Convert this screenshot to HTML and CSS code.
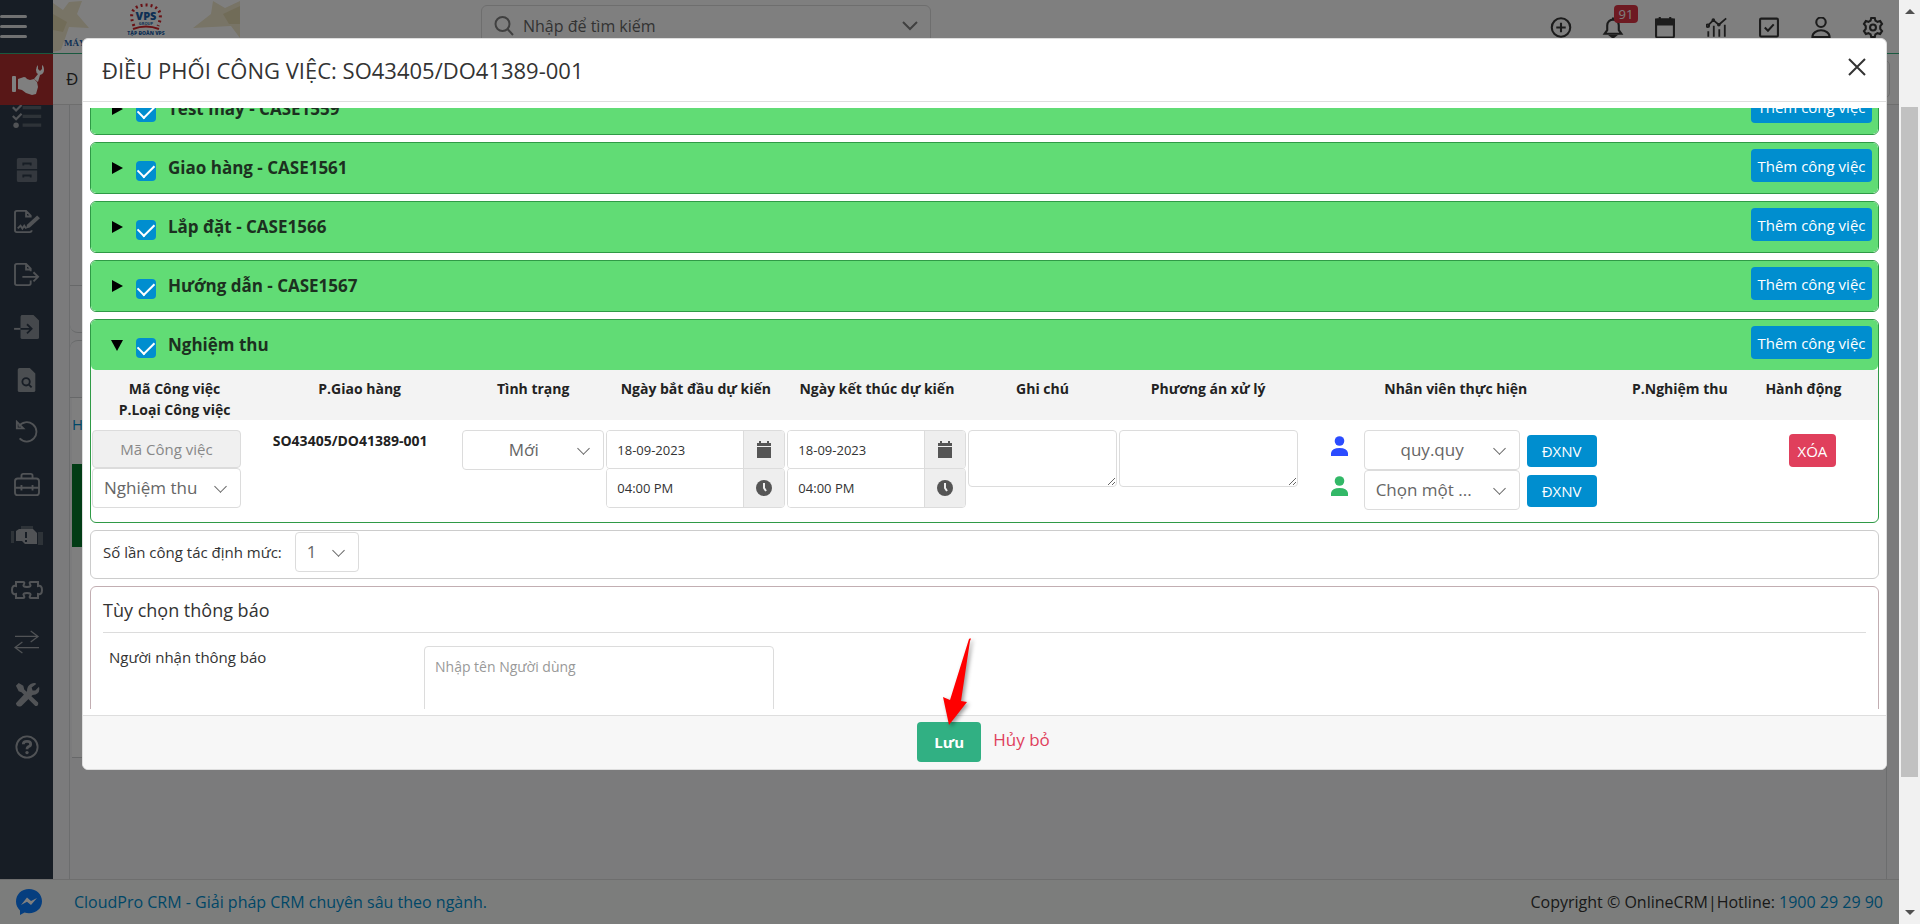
FILE: index.html
```html
<!DOCTYPE html>
<html lang="vi">
<head>
<meta charset="utf-8">
<title>Điều phối công việc - CloudPro CRM</title>
<link rel="stylesheet" href="styles.css">
</head>
<body>
<div class="shell">
  <div class="app">
    <header class="topbar">
      <button class="burger" type="button" aria-label="Menu"><i></i><i></i><i></i></button>
      <svg class="logo" viewBox="0 0 187 52" width="187" height="52">
        <rect width="187" height="52" fill="#fff"/>
        <path d="M0 3L10 10 16 2 29 1 24 14 36 28 16 27 8 50 0 52Z" fill="#f0e8cc"/>
        <path d="M0 14L14 22 10 32 0 30Z" fill="#e3d8b0"/>
        <path d="M140 28L158 14 160 1 172 8 187 1V38L178 26Z" fill="#f0e8cc"/>
        <path d="M170 14L187 6V24L176 24Z" fill="#e3d8b0"/>
        <path d="M81 26C74 10 84 5 93 5S112 10 105 26" fill="none" stroke="#d2232a" stroke-width="3" stroke-dasharray="2 3"/>
        <text x="93" y="20" class="logo-vps">VPS</text>
        <text x="93" y="25" class="logo-tiny">GROUP</text>
        <path d="M80 29Q93 24 106 29" fill="none" stroke="#d2232a" stroke-width="2"/>
        <text x="93" y="35" class="logo-small">TẬP ĐOÀN VPS</text>
        <text x="11" y="46" class="logo-word">MÁY</text>
      </svg>
      <label class="search">
        <svg width="20" height="20" viewBox="0 0 20 20" class="line"><circle cx="8.500" cy="8" r="7"/><path d="M13.500 13L19 19"/></svg>
        <input type="text" placeholder="Nhập để tìm kiếm" aria-label="Tìm kiếm">
        <svg width="16" height="10" viewBox="0 0 16 10" class="line"><path d="M1 1L8 8 15 1"/></svg>
      </label>
      <nav class="tools">
        <button type="button" aria-label="Thêm"><svg viewBox="0 0 20 20"><circle cx="10" cy="10" r="8.800"/><path d="M10 5.500V14.500M5.500 10H14.500"/></svg></button>
        <button type="button" aria-label="Thông báo" class="bell"><svg viewBox="0 0 20 20"><path d="M2 16H18L15.500 12.500V8A5.500 5.500 0 0 0 4.500 8V12.500ZM10 .500V2.500"/><path d="M8 18H12L10 19.500Z" fill="#383838"/></svg><span class="badge">91</span></button>
        <button type="button" aria-label="Lịch"><svg viewBox="0 0 20 20"><rect x="1.500" y="2.500" width="17" height="17" rx="1.500"/><path d="M1.500 2.500H18.500V7H1.500Z" fill="#383838"/><path d="M5 0V3M15 0V3"/></svg></button>
        <button type="button" aria-label="Báo cáo"><svg viewBox="0 0 24 20"><path d="M2 8L8 2 14 7 22 0M2.500 20V14M8.500 20V8M14.500 20V12M20.500 20V7"/><circle cx="2" cy="8" r="1.500"/><circle cx="8" cy="2" r="1"/><circle cx="14" cy="7" r="1"/></svg></button>
        <button type="button" aria-label="Công việc"><svg viewBox="0 0 20 20"><rect x="1.500" y="1.500" width="17" height="17" rx="1"/><path d="M6 10L9 13 14.500 7"/></svg></button>
        <button type="button" aria-label="Tài khoản"><svg viewBox="0 0 20 20"><circle cx="10" cy="5" r="4.500"/><path d="M1.800 19.200C1.800 10.500 18.200 10.500 18.200 19.200Z"/></svg></button>
        <button type="button" aria-label="Cài đặt"><svg viewBox="0 0 20 20"><circle cx="10" cy="10" r="2.800"/><path d="M8.300 1H11.700L12.300 3.500 14.300 4.600 16.800 3.900 18.600 6.700 16.900 8.700V11.300L18.600 13.300 16.800 16.100 14.300 15.400 12.300 16.500 11.700 19H8.300L7.700 16.500 5.700 15.400 3.200 16.100 1.400 13.300 3.100 11.300V8.700L1.400 6.700 3.200 3.900 5.700 4.600 7.700 3.500Z"/></svg></button>
      </nav>
    </header>
    <div class="middle">
      <aside class="sidebar">
        <a href="#" class="current" aria-label="Điều phối"><svg width="34" height="32" viewBox="0 0 34 32"><rect x="2" y="12" width="4" height="16" rx="1"/><path d="M8 15L14 13Q16 13 17 15L20 16 24 15 27 18 28 23 26 30 22 31 16 29 12 26 8 25Z"/><path d="M28 1Q26 3 26 6T28 10L24 15 28 18 30 11Q34 10 34 6T32 1V5L30 7 28 5Z"/></svg></a>
        <nav class="side-list">
          <a href="#" class="dim" aria-label="Danh sách"><svg viewBox="0 0 26 22"><path d="M9 1H26V4H9ZM9 9H26V12H9ZM9 17H26V20H9Z" opacity=".4"/><path d="M0 2L3 5 8 0" class="stroke"/><path d="M0 10L3 13 8 8" class="stroke"/><circle cx="3" cy="18.500" r="2.500"/></svg></a>
          <a href="#" class="dim" aria-label="Lưu trữ"><svg viewBox="0 0 26 26"><path fill-rule="evenodd" d="M2 2Q2 0 4 0H22Q24 0 24 2V12H2ZM8 8H10V7H16V8H18V5H8ZM2 13.500H24V24Q24 26 22 26H4Q2 26 2 24ZM8 21H10V20H16V21H18V18H8Z" opacity=".5"/></svg></a>
          <a href="#" aria-label="Hợp đồng"><svg viewBox="0 0 28 26"><path class="stroke" d="M18 8V6L13 1H3Q1 1 1 3V22Q1 24 3 24H17Q19 24 19 22M13 1V7H18M4 20L7 17 9 20 11 17 13 20"/><path d="M25 6L28 9 17 19 13 20 14 16Z"/></svg></a>
          <a href="#" aria-label="Xuất"><svg viewBox="0 0 28 26"><path class="stroke" d="M18 9V6L13 1H3Q1 1 1 3V22Q1 24 3 24H16Q18 24 18 22V19M13 1V7H18M9 15H26M21 10L26 15 21 20"/></svg></a>
          <a href="#" aria-label="Nhập"><svg viewBox="0 0 28 26"><path d="M8 0H21L27 6V24Q27 26 25 26H9Q7 26 7 24V2Z" opacity=".8"/><path d="M0 15H7" class="stroke"/><path d="M7 15H19M14 10L19 15 14 20" fill="none" stroke="#2f3b4a" stroke-width="2"/></svg></a>
          <a href="#" aria-label="Tra cứu"><svg viewBox="0 0 26 26"><path d="M5 0H16L22 6V24Q22 26 20 26H5Q3 26 3 24V2Q3 0 5 0Z" opacity=".9"/><circle cx="12" cy="15" r="4" fill="none" stroke="#2f3b4a" stroke-width="2"/><path d="M15 18L18 21" stroke="#2f3b4a" stroke-width="2"/></svg></a>
          <a href="#" aria-label="Hoàn tác"><svg viewBox="0 0 26 26"><path class="stroke" d="M4 7A10.500 10.500 0 1 1 5 20M2 2V9H9Z"/></svg></a>
          <a href="#" aria-label="Bộ công cụ"><svg viewBox="0 0 28 26"><rect class="stroke" x="1" y="6" width="26" height="18" rx="3"/><path class="stroke" d="M8 6V3Q8 1 10 1H18Q20 1 20 3V6M1 16H27M8 13V19M20 13V19"/></svg></a>
          <a href="#" aria-label="Động cơ"><svg viewBox="0 0 32 22"><path d="M0 5H3V17H0ZM10 0H22V3H10ZM27 6H32V19H27Z" opacity=".4"/><path d="M5 5L8 3H22L26 7V18H14L11 15H5Z"/><path d="M15 6V12M15 14V16" stroke="#2f3b4a" stroke-width="2"/></svg></a>
          <a href="#" aria-label="Tích hợp"><svg viewBox="0 0 32 22"><path class="stroke" d="M5 3H12Q14 3 13 5Q11 8 16 8T19 5Q18 3 20 3H27V7Q31 6 31 11T27 15V19H20Q18 19 19 17Q21 14 16 14T13 17Q14 19 12 19H5V15Q1 16 1 11T5 7Z"/></svg></a>
          <a href="#" aria-label="Chuyển đổi"><svg viewBox="0 0 28 26"><path d="M1 7H26M18 1L26 7 18 13M27 19H1M9 13L1 19 9 25" fill="none" stroke="#a2a7ad" stroke-width="1.300"/></svg></a>
          <a href="#" aria-label="Sửa chữa"><svg viewBox="0 0 26 26"><path d="M1 3L4 0 9 3 10 7 25 21Q26 25 22 25L7 10 4 9Z"/><path d="M17 1Q22-1 23 1L18 5 19 8 22 8 26 4Q28 12 19 13L7 25Q2 27 1 22L13 9Q13 3 17 1Z"/></svg></a>
          <a href="#" aria-label="Trợ giúp"><svg viewBox="0 0 26 26"><circle class="stroke" cx="13" cy="13" r="11.500"/><path d="M9 10Q9 7 13 7T17 10Q17 12 14 13 13 14 13 15.500" fill="none" stroke="#a2a7ad" stroke-width="3"/><circle cx="13" cy="19" r="1.800"/></svg></a>
        </nav>
      </aside>
      <main class="page">
        <div class="crumb"><span>Đ</span><span class="crumb-box"></span></div>
        <div class="canvas">
          <section class="panel panel-a"><div></div></section>
          <section class="panel panel-b">
            <div class="panel-head"></div>
            <div class="grid-box"><a href="#">H</a><div class="event"></div></div>
          </section>
        </div>
      </main>
    </div>
    <footer class="footer">
      <svg width="26" height="26" viewBox="0 0 26 26"><path d="M13 0C5.500 0 0 5.300 0 12.500 0 16.200 1.600 19.200 4 21.400V26L8.500 23.600C10 24 11.500 24.200 13 24.200 20.500 24.200 26 19.400 26 12.300S20.500 0 13 0Z" fill="#0a7cff"/><path d="M5 16L11 8.500 15 12 21 9 15 16 11 12.800Z" fill="#fff"/></svg>
      <a href="#">CloudPro CRM - Giải pháp CRM chuyên sâu theo ngành.</a>
      <p>Copyright © OnlineCRM|Hotline: <a href="#">1900 29 29 90</a></p>
    </footer>
  </div>
  <div class="scrollbar"><i class="up"></i><i class="thumb"></i><i class="down"></i></div>
</div>

<div class="backdrop">
  <div class="modal" role="dialog" aria-labelledby="dlg-title">
    <header class="modal-head">
      <h1 id="dlg-title">ĐIỀU PHỐI CÔNG VIỆC: SO43405/DO41389-001</h1>
      <button type="button" aria-label="Đóng"><svg width="18" height="18" viewBox="0 0 18 18"><path d="M1 1L17 17M17 1L1 17" stroke="#333" stroke-width="2" fill="none"/></svg></button>
    </header>
    <div class="modal-body">
      <div class="scrolled">
        <details class="job"><summary><i class="tri"></i><input type="checkbox" id="c1" checked><label for="c1">Test máy - CASE1559</label><button type="button" class="btn blue">Thêm công việc</button></summary></details>
        <details class="job"><summary><i class="tri"></i><input type="checkbox" id="c2" checked><label for="c2">Giao hàng - CASE1561</label><button type="button" class="btn blue">Thêm công việc</button></summary></details>
        <details class="job"><summary><i class="tri"></i><input type="checkbox" id="c3" checked><label for="c3">Lắp đặt - CASE1566</label><button type="button" class="btn blue">Thêm công việc</button></summary></details>
        <details class="job"><summary><i class="tri"></i><input type="checkbox" id="c4" checked><label for="c4">Hướng dẫn - CASE1567</label><button type="button" class="btn blue">Thêm công việc</button></summary></details>
        <details class="job" open>
          <summary><i class="tri"></i><input type="checkbox" id="c5" checked><label for="c5">Nghiệm thu</label><button type="button" class="btn blue">Thêm công việc</button></summary>
          <table class="tasks">
            <colgroup><col class="w-code"><col class="w-ship"><col class="w-status"><col class="w-date"><col class="w-date"><col class="w-note"><col class="w-date"><col class="w-staff"><col class="w-check"><col class="w-act"></colgroup>
            <thead>
              <tr><th>Mã Công việc<br>P.Loại Công việc</th><th>P.Giao hàng</th><th>Tình trạng</th><th>Ngày bắt đầu dự kiến</th><th>Ngày kết thúc dự kiến</th><th>Ghi chú</th><th>Phương án xử lý</th><th>Nhân viên thực hiện</th><th>P.Nghiệm thu</th><th>Hành động</th></tr>
            </thead>
            <tbody>
              <tr>
                <td><div class="stack code"><input type="text" class="field code-input" placeholder="Mã Công việc" aria-label="Mã Công việc" disabled><span class="pick"><select aria-label="Loại Công việc"><option>Nghiệm thu</option></select></span></div></td>
                <td class="ship">SO43405/DO41389-001</td>
                <td><span class="pick mid"><select aria-label="Tình trạng"><option>Mới</option></select></span></td>
                <td><div class="stack">
                  <div class="group"><input type="text" value="18-09-2023" aria-label="Ngày bắt đầu"><span><svg width="14" height="17" viewBox="0 0 14 17"><path d="M2 2V0H4V2H10V0H12V2H14V5H0V2ZM0 6H14V17H0Z"/></svg></span></div>
                  <div class="group"><input type="text" value="04:00 PM" aria-label="Giờ bắt đầu"><span><svg width="16" height="16" viewBox="0 0 16 16"><circle cx="8" cy="8" r="8"/><path d="M8 3V8L10 11" fill="none" stroke="#eee" stroke-width="2"/></svg></span></div></div></td>
                <td><div class="stack">
                  <div class="group"><input type="text" value="18-09-2023" aria-label="Ngày kết thúc"><span><svg width="14" height="17" viewBox="0 0 14 17"><path d="M2 2V0H4V2H10V0H12V2H14V5H0V2ZM0 6H14V17H0Z"/></svg></span></div>
                  <div class="group"><input type="text" value="04:00 PM" aria-label="Giờ kết thúc"><span><svg width="16" height="16" viewBox="0 0 16 16"><circle cx="8" cy="8" r="8"/><path d="M8 3V8L10 11" fill="none" stroke="#eee" stroke-width="2"/></svg></span></div></div></td>
                <td><textarea class="area" aria-label="Ghi chú"></textarea></td>
                <td><textarea class="area" aria-label="Phương án xử lý"></textarea></td>
                <td><div class="staff">
                  <svg class="main" width="17" height="20" viewBox="0 0 17 20"><circle cx="8.500" cy="5" r="4.800"/><path d="M0 20V17Q1 12 8.500 12T17 17V20Z"/></svg><span class="pick mid"><select aria-label="Nhân viên chính"><option>quy.quy</option></select></span><button type="button" class="btn blue">ĐXNV</button>
                  <svg class="second" width="17" height="20" viewBox="0 0 17 20"><circle cx="8.500" cy="5" r="4.800"/><path d="M0 20V17Q1 12 8.500 12T17 17V20Z"/></svg><span class="pick"><select aria-label="Nhân viên phụ"><option>Chọn một ...</option></select></span><button type="button" class="btn blue">ĐXNV</button>
                </div></td>
                <td></td>
                <td class="act"><button type="button" class="btn red">XÓA</button></td>
              </tr>
            </tbody>
          </table>
        </details>
        <section class="quota"><label for="quota">Số lần công tác định mức:</label><span class="pick"><select id="quota"><option>1</option></select></span></section>
        <section class="notify">
          <h2>Tùy chọn thông báo</h2>
          <div class="notify-row"><label for="people">Người nhận thông báo</label><textarea id="people" placeholder="Nhập tên Người dùng"></textarea></div>
        </section>
      </div>
    </div>
    <footer class="modal-foot">
      <button type="button" class="btn save">Lưu</button>
      <a href="#">Hủy bỏ</a>
      <svg class="pointer" width="40" height="94" viewBox="0 0 40 94"><path d="M27 2Q30 0 28 4L19 64 25 65 7 88 1 60 8 63Z" fill="red"/></svg>
    </footer>
  </div>
</div>
</body>
</html>
```
FILE: styles.css
```css
* { box-sizing: border-box; }
body {
  margin: 0;
  font-family: "Open Sans", "Noto Sans", sans-serif;
  font-size: 13px;
  line-height: 20px;
  color: #333;
  overflow: hidden;
}
button, input, select, textarea { font: inherit; color: inherit; margin: 0; }
button { border: 0; background: none; padding: 0; cursor: pointer; }
a { color: #008ecf; text-decoration: none; }
h1, h2, p { margin: 0; font-weight: 400; }

.shell { display: flex; height: 100vh; }
.app { flex: 1; display: flex; flex-direction: column; min-width: 0; background: #f6f7f9; }

/* top bar */
.topbar { display: flex; height: 54px; background: #fff; border-bottom: 1px solid #32b37f; }
.burger { width: 53px; background: #2f3b4a; display: flex; flex-direction: column; gap: 7px; padding-top: 15px; }
.burger i { width: 27px; height: 3px; border-radius: 2px; background: #e0e2e5; }
.logo { flex: none; }
.logo-vps { font: 900 11px "Open Sans", sans-serif; fill: #1c5fa8; text-anchor: middle; }
.logo-tiny { font: 700 4px "Open Sans", sans-serif; fill: #1c5fa8; text-anchor: middle; }
.logo-small { font: 800 5px "Open Sans", sans-serif; fill: #1c5fa8; text-anchor: middle; }
.logo-word { font: 700 9px "Liberation Serif", serif; fill: #1c5fa8; }
.search {
  width: 450px; height: 42px; margin: 5px 0 0 241px; padding: 0 12px;
  display: flex; align-items: center; gap: 7px;
  border: 1px solid #dcdcdc; border-radius: 6px;
}
.search input { flex: 1; min-width: 0; border: 0; outline: 0; background: none; font-size: 16px; }
.search input::placeholder { color: #666; }
.line { fill: none; stroke: #808080; stroke-width: 2; }
.tools { flex: 1; display: flex; justify-content: flex-end; align-items: flex-start; gap: 30px; padding: 17px 15px 0 0; }
.tools button { position: relative; width: 22px; height: 21px; }
.tools svg { width: 22px; height: 21px; fill: none; stroke: #383838; stroke-width: 2; }
.badge { position: absolute; left: 12px; top: -12px; width: 24px; height: 18px; border-radius: 4px; background: #dc3545; color: #fff; font-size: 13px; line-height: 18px; }

/* side bar */
.middle { flex: 1; display: flex; min-height: 0; }
.sidebar { width: 53px; display: flex; flex-direction: column; background: #2f3b4a; padding-bottom: 120px; }
.current { height: 51px; background: #b02e2e; display: grid; place-items: center; }
.current svg { fill: #fff; }
.side-list { flex: 1; display: flex; flex-direction: column; align-items: center; justify-content: space-between; }
.side-list a { display: block; height: 24px; }
.side-list svg { display: block; height: 24px; width: 32px; fill: #a2a7ad; }
.side-list .stroke { fill: none; stroke: #a2a7ad; stroke-width: 2; }

/* page behind */
.page { flex: 1; display: flex; flex-direction: column; min-width: 0; }
.crumb { height: 51px; display: flex; justify-content: space-between; align-items: center; padding: 0 9px 0 13px; background: #fff; border-bottom: 1px solid #dcdcdc; font-size: 17px; }
.crumb-box { width: 200px; height: 38px; border: 1px solid #dcdcdc; border-radius: 5px; }
.canvas { flex: 1; margin: 0 12px 0 16px; border: solid #d8dadc; border-width: 0 1px; }
.panel { border: 1px solid #cfd1d3; border-left: 0; }
.panel-a { height: 228px; border-top: 0; border-radius: 0 0 8px 8px; padding-top: 180px; }
.panel-a div { border-top: 1px solid #cfd1d3; }
.panel-b { margin-top: 7px; border-bottom: 0; border-radius: 8px 8px 0 0; }
.panel-head { height: 57px; border-bottom: 1px solid #cfd1d3; }
.grid-box { margin-left: 2px; height: 360px; padding-top: 16px; background: #fff; border-bottom: 1px solid #cfd1d3; font-size: 15px; }
.event { height: 83px; margin-top: 30px; background: #04782a; }
.footer { height: 45px; display: flex; align-items: center; gap: 32px; padding: 0 16px; background: #f8fbf8; border-top: 1px solid #dcdcdc; font-size: 16px; }
.footer p { margin-left: auto; }

.scrollbar { width: 21px; padding: 9px 2px; background: #f1f1f1; display: flex; flex-direction: column; align-items: center; z-index: 2; }
.scrollbar .up { border: 5px solid transparent; border-top: 0; border-bottom-color: #505050; }
.scrollbar .down { border: 5px solid transparent; border-bottom: 0; border-top-color: #505050; }
.scrollbar .thumb { width: 17px; height: 74%; margin: 93px 0 auto; background: #c1c1c1; }

/* dialog */
.backdrop { position: fixed; inset: 0 21px 0 0; background: rgba(0, 0, 0, .5); padding: 38px 12px 0 82px; }
.modal { background: #fff; border: 1px solid #dedede; border-radius: 6px; display: flex; flex-direction: column; }
.modal-head { display: flex; justify-content: space-between; align-items: center; height: 63px; padding: 0 20px 0 19px; border-bottom: 1px solid #dedede; }
.modal-head h1 { font-size: 22px; line-height: 28px; }
.modal-head button { padding-bottom: 2px; }
.modal-body { height: calc(100vh - 311px); padding: 6px 7px; }
.scrolled { height: 100%; overflow: hidden; display: flex; flex-direction: column; gap: 7px; }
.scrolled > * { flex: none; }
.scrolled > :first-child { margin-top: -25px; }

.job { border: 1px solid #2f9a46; border-radius: 6px; overflow: hidden; }
summary { display: flex; align-items: flex-start; height: 50px; padding: 0 6px 0 20px; background: #61dc75; border-radius: 5px; list-style: none; }
summary input {
  appearance: none; width: 20px; height: 20px; margin: 18px 12px 0 13px;
  border-radius: 4px; background: #008ecf; display: grid; place-items: center;
}
summary input::after { content: ""; width: 8px; height: 14px; margin-bottom: 4px; border: solid #fff; border-width: 0 2px 2px 0; transform: rotate(45deg); }
summary label { flex: 1; padding-top: 13px; font-size: 17px; line-height: 24px; font-weight: 700; color: #1c3020; }
.tri { margin: 19px 0 0 1px; border: solid transparent; border-width: 6px 0 6px 11px; border-left-color: #000; }
.job[open] .tri { margin: 20px 0 0; border-width: 11px 6px 0; border-left-color: transparent; border-top-color: #000; }
.btn { border-radius: 4px; color: #fff; font-size: 15px; line-height: 20px; }
.blue { background: #008ecf; }
.red { background: #e03f5c; }
summary .btn { margin-top: 6px; width: 121px; height: 33px; }

.tasks { width: 100%; border-collapse: collapse; table-layout: fixed; margin-bottom: 12px; }
.w-code { width: 167px; }
.w-ship { width: 203px; }
.w-status { width: 144px; }
.w-date { width: 181px; }
.w-note { width: 150px; }
.w-staff { width: 314px; }
.w-check { width: 134px; }
.w-act { width: 131px; }
th { height: 50px; padding: 8px 0 0; background: #f3f3f3; font-size: 14px; font-weight: 700; line-height: 21px; vertical-align: top; white-space: nowrap; color: #222; }
th:last-child { padding-right: 18px; }
td { padding: 10px 1px 0; vertical-align: top; }
.ship { padding: 11px 19px 0 0; text-align: center; font-size: 14px; font-weight: 700; color: #222; }
.act { text-align: center; padding: 14px 0 0; }
.act .btn { width: 47px; height: 33px; }
.stack { display: flex; flex-direction: column; }
.code { width: 149px; }
.code-input { height: 38px; border: 1px solid #dcdcdc; border-radius: 4px; background: #f0f0f0; text-align: center; width: 100%; font-size: 15px; }
.code-input::placeholder { color: #888; }
.pick { position: relative; display: block; }
.pick select { appearance: none; width: 100%; height: 40px; padding: 0 30px 0 11px; border: 1px solid #dcdcdc; border-radius: 4px; background: #fff; color: #666; font-size: 17px; }
.pick::after { content: ""; position: absolute; right: 16px; top: 14px; width: 8px; height: 8px; border: solid #666; border-width: 0 1px 1px 0; transform: rotate(45deg); pointer-events: none; }
.mid select { text-align-last: center; }
.group { display: flex; height: 39px; border: 1px solid #dcdcdc; border-radius: 4px; overflow: hidden; }
.group + .group { margin-top: -1px; height: 40px; }
.group input { flex: 1; min-width: 0; border: 0; padding: 0 10px; }
.group span { width: 41px; display: grid; place-items: center; background: #eee; border-left: 1px solid #dcdcdc; }
.group svg { fill: #555; }
.area { display: block; width: 100%; height: 57px; border: 1px solid #dcdcdc; border-radius: 4px; }
.staff { display: grid; grid-template-columns: 26px minmax(0, 156px) 70px; column-gap: 7px; align-items: center; padding-left: 31px; }
.staff svg { margin-top: -8px; }
.staff .btn { height: 32px; margin-top: 2px; }
.main { fill: #2b4cff; }
.second { fill: #32b867; }

.quota { display: flex; align-items: flex-start; gap: 13px; padding: 1px 12px 6px; border: 1px solid #ccc; border-radius: 6px; }
.quota label { padding-top: 10px; font-size: 15px; }
.quota .pick { width: 64px; }
.quota select { padding-right: 20px; }
.notify { height: 240px; padding: 0 12px; border: 1px solid #c2aeb2; border-radius: 6px; }
.notify h2 { height: 46px; padding-top: 11px; border-bottom: 1px solid #dcdcdc; font-size: 18px; line-height: 24px; font-weight: 500; }
.notify-row { display: flex; align-items: flex-start; padding: 13px 6px; font-size: 15px; }
.notify-row label { width: 315px; padding-top: 1px; }
.notify-row textarea { width: 350px; height: 120px; padding: 10px; border: 1px solid #dcdcdc; border-radius: 4px; resize: none; font-size: 14px; }
.notify-row textarea::placeholder { color: #999; }

.modal-foot { position: relative; height: 54px; display: flex; justify-content: center; align-items: flex-start; gap: 12px; padding: 6px 2px 0 0; background: #f7f7f7; border-top: 1px solid #dedede; border-radius: 0 0 6px 6px; font-size: 17px; }
.modal-foot a { color: #e03f5c; padding-top: 8px; }
.save { width: 64px; height: 40px; background: #31b083; font-weight: 700; }
.pointer { position: absolute; left: calc(50% - 43px); bottom: 38px; filter: drop-shadow(2px 2px 2px rgba(0, 0, 0, .4)); }
```
